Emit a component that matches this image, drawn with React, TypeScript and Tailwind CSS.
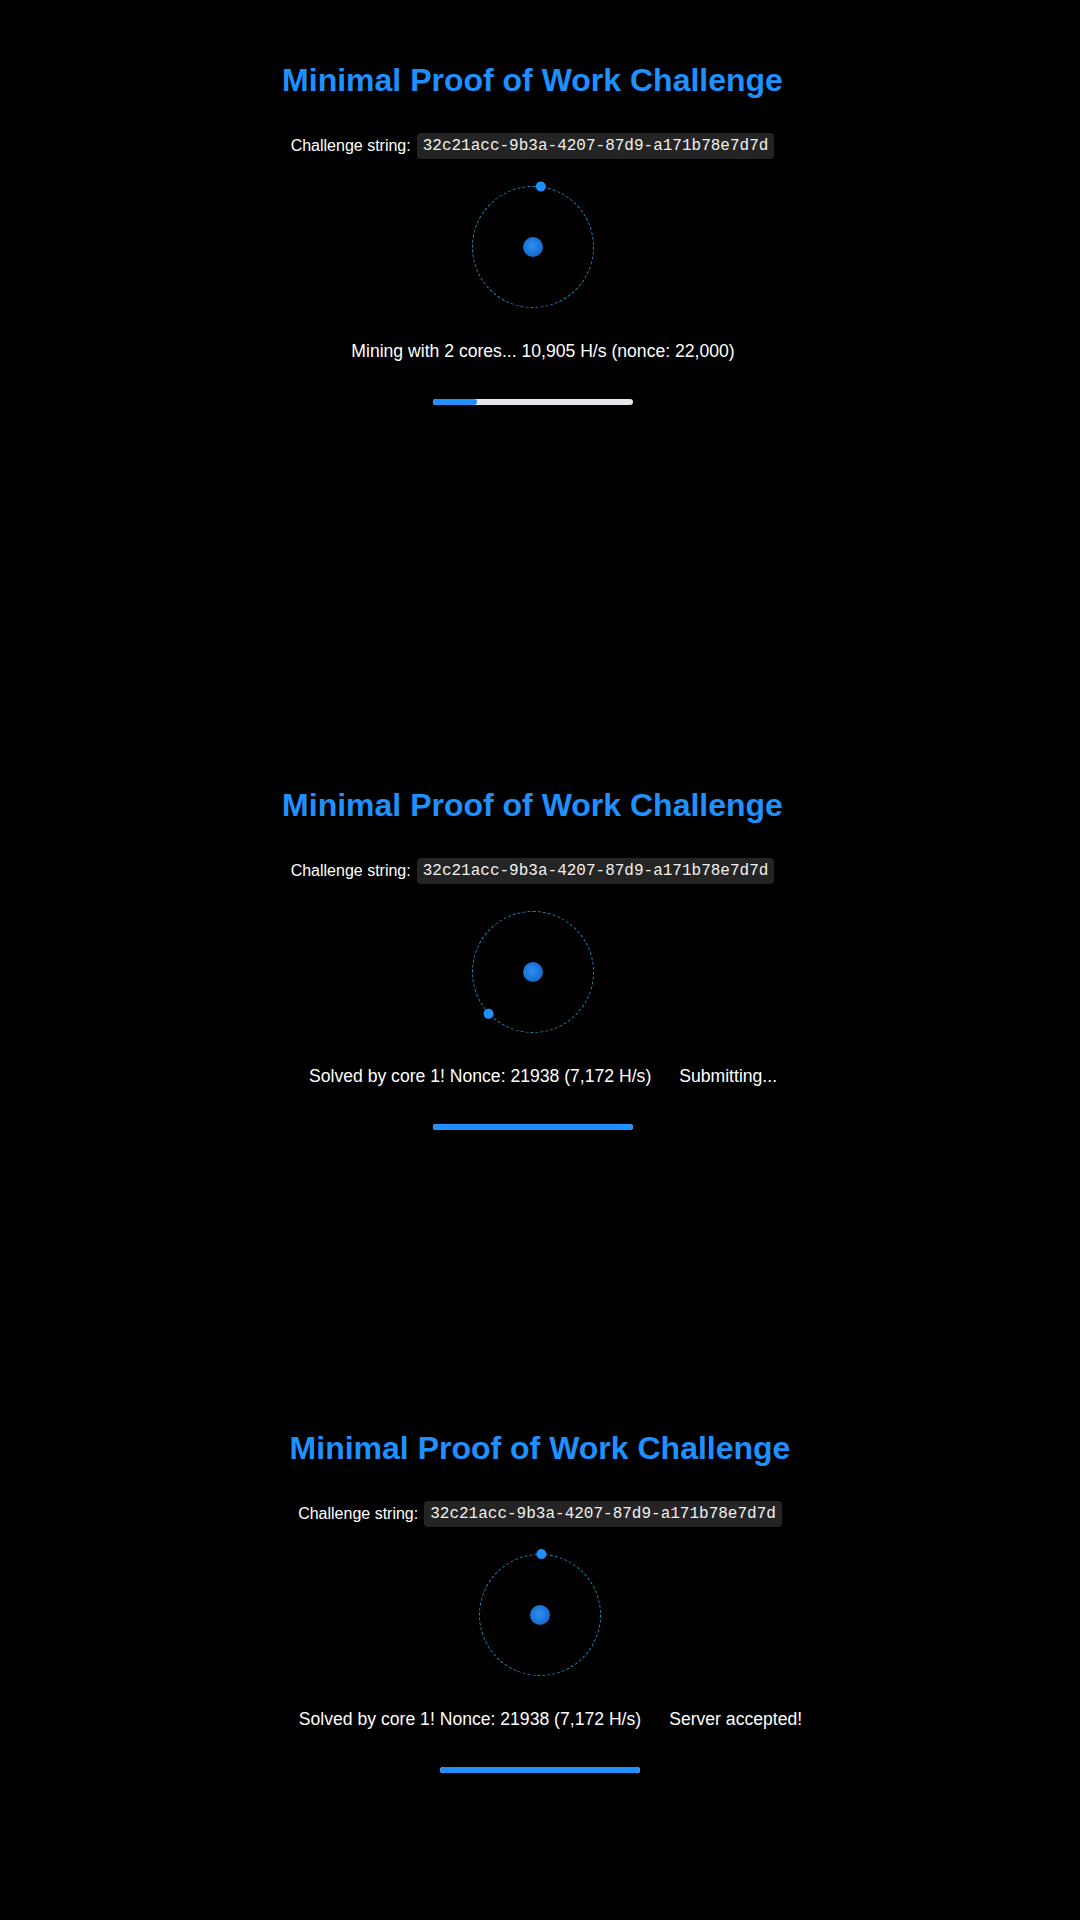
import React from "react";

type Snapshot = {
  height: string;
  width: string;
  angle: number;
  progress: number;
  status: string;
  server?: string;
};

const CHALLENGE = "32c21acc-9b3a-4207-87d9-a171b78e7d7d";

const snapshots: Snapshot[] = [
  {
    height: "h-[725px]",
    width: "w-[1065px]",
    angle: 7.4,
    progress: 22,
    status: "Mining with 2 cores... 10,905 H/s (nonce: 22,000)",
  },
  {
    height: "h-[643px]",
    width: "w-[1065px]",
    angle: 226.8,
    progress: 100,
    status: "Solved by core 1! Nonce: 21938 (7,172 H/s)",
    server: "Submitting...",
  },
  {
    height: "h-[552px]",
    width: "w-[1080px]",
    angle: 1.3,
    progress: 100,
    status: "Solved by core 1! Nonce: 21938 (7,172 H/s)",
    server: "Server accepted!",
  },
];

const Orbit: React.FC<{ angle: number }> = ({ angle }) => (
  <div className="relative mt-[27px] h-[122px] w-[122px] rounded-full border border-dashed border-[#1c8cbf]">
    <div
      className="absolute inset-[-1px]"
      style={{ transform: `rotate(${angle}deg)` }}
    >
      <div className="absolute left-1/2 top-[-5px] h-[10px] w-[10px] -translate-x-1/2 rounded-full bg-[#1e90ff]" />
    </div>
    <div className="absolute left-1/2 top-1/2 h-[20px] w-[20px] -translate-x-1/2 -translate-y-1/2 rounded-full bg-[radial-gradient(circle_at_45%_45%,#2f8ff2_0%,#1a73d6_55%,#1259b0_100%)]" />
  </div>
);

const PowSection: React.FC<{ s: Snapshot }> = ({ s }) => (
  <section className={`${s.height} ${s.width} flex flex-col items-center pt-[62px]`}>
    <h1 className="text-[32px] font-bold leading-[37px] text-[#1e90ff]">
      Minimal Proof of Work Challenge
    </h1>

    <div className="mt-[34px] flex h-[26px] items-center gap-[6px] text-base text-white">
      <span>Challenge string:</span>
      <code className="rounded-[4px] bg-[#242424] px-[6px] py-[4px] font-['Liberation_Mono',monospace] text-base leading-[18px] text-[#f0f0f0]">
        {CHALLENGE}
      </code>
    </div>

    <Orbit angle={s.angle} />

    <p className="mt-[33px] flex pl-[21px] text-[17.6px] leading-[20px] text-white">
      <span>{s.status}</span>
      {s.server && <span className="ml-[28px]">{s.server}</span>}
    </p>

    <div className="mt-[38px] h-[6px] w-[200px] overflow-hidden rounded-full bg-[#e6e6eb]">
      <div className="h-full rounded-full bg-[#1e90ff]" style={{ width: `${s.progress}%` }} />
    </div>
  </section>
);

export default function App() {
  return (
    <div className="min-h-[1920px] w-[1080px] bg-black font-['Liberation_Sans',Arial,sans-serif]">
      {snapshots.map((s, i) => (
        <PowSection key={i} s={s} />
      ))}
    </div>
  );
}
